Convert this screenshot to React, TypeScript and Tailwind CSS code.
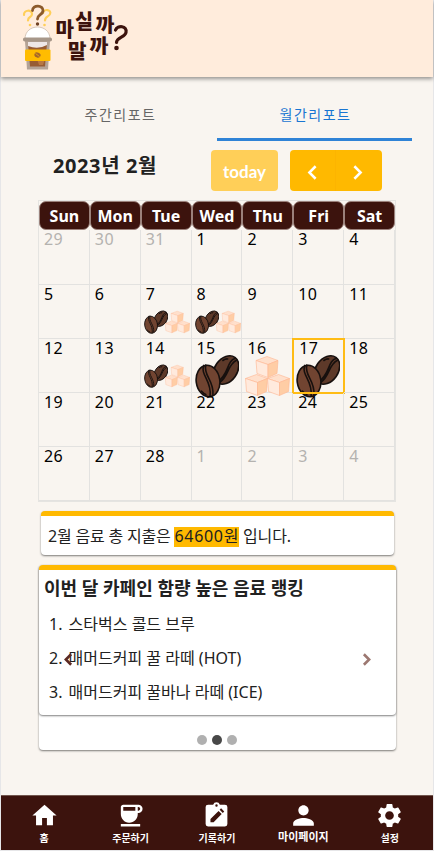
import React from 'react';
import { MdHome, MdCoffee, MdPerson, MdSettings } from 'react-icons/md';

const Chevron = ({ right = false, className }: { right?: boolean; className: string }) => (
  <svg viewBox="0 0 24 24" className={className} fill="none" stroke="currentColor">
    <path d={right ? 'm9 6 6 6-6 6' : 'm15 6-6 6 6 6'} />
  </svg>
);

const Beans = ({ className }: { className: string }) => (
  <svg viewBox="0 0 44 44" preserveAspectRatio="none" className={className}>
    <g stroke="#17100e" strokeWidth="1.6" strokeLinecap="round">
      <g transform="rotate(35 31 16)">
        <ellipse cx="31" cy="16" rx="11.2" ry="15.5" fill="#5d3929" />
        <path d="M32 1c-6 8 4 15-1 30M34 2c-5 9 3 17-1 28" fill="none" />
        <path d="M23 10q1-3 3-4" fill="none" />
      </g>
      <g transform="rotate(-8 13 27)">
        <ellipse cx="13" cy="27" rx="11.8" ry="15.8" fill="#714431" />
        <path d="M11 11c-5 9 6 16 2 31M13 11c-4 10 6 16 3 30" fill="none" />
        <path d="M5 36q2 3 4 4" fill="none" />
      </g>
    </g>
  </svg>
);

const Cube = ({ x, y }: { x: number; y: number }) => (
  <g transform={`translate(${x} ${y})`} stroke="#ffb591" strokeWidth=".6" strokeLinejoin="round">
    <path d="M0 4 11 0 22 4 12 8Z" fill="#ffe0cc" />
    <path d="M0 4 12 8V21L1 17Z" fill="#ffeadd" />
    <path d="M12 8 22 4 21 17 12 21Z" fill="#ffcda5" />
  </g>
);

const Sugar = ({ className }: { className: string }) => (
  <svg viewBox="0 0 45 41" className={className}>
    <Cube x={11} y={1} />
    <Cube x={0.5} y={19} />
    <Cube x={22.5} y={19} />
  </svg>
);

const Logo = () => (
  <svg viewBox="0 0 120 72" className="ml-[17px] mt-[3px] h-[72px] w-[120px] shrink-0">
    <g fill="none" strokeLinecap="round" strokeLinejoin="round">
      <path d="M6 12c-.5-5 8-6 8-1 0 4-4 2-4 6.500M25 10c1-5 9-3 7 1-1 3-5 2-5 6.500" stroke="#ffcf58" strokeWidth="2.200" />
      <path d="M14.500 7.500c0-6 11-6 10.500.5-.5 4-5.500 3.500-5.500 8" stroke="#8c5a2b" strokeWidth="2.800" />
    </g>
    <circle cx="19.500" cy="21" r="1.700" fill="#704224" />
    <circle cx="12" cy="22" r="1.300" fill="#ffcf58" />
    <circle cx="26.500" cy="22" r="1.300" fill="#ffcf58" />
    <path d="M7 36c0-16 25-16 25 0Z" fill="#fff" stroke="#cdbcae" strokeWidth=".8" />
    <path d="M7 38h25l-2 28.500H9Z" fill="#b4a396" />
    <path d="M10 40h19l-2 23.500H12Z" fill="#975c34" />
    <path d="M10 39h19v3q-9 5-19 1Z" fill="#eee7e7" />
    <path d="M19 56h8l-2 6h-4Z" fill="#b87843" />
    <rect x="5" y="34.500" width="29" height="4" rx="1.800" fill="#a79789" />
    <rect x="7" y="46.500" width="25.500" height="11.500" rx="1" fill="#ffbc00" />
    <ellipse cx="19.500" cy="52" rx="3.200" ry="2.500" fill="#a4662c" transform="rotate(25 19.500 52)" />
    <path d="m17.500 50.500 4 3" stroke="#ffbc00" strokeWidth=".7" />
    <g fill="#3c130d" fontFamily="'Noto Sans CJK KR', sans-serif" fontWeight="800">
      <text x="37.500" y="34" fontSize="20" textLength="18.500" lengthAdjust="spacingAndGlyphs">마</text>
      <text x="57" y="25.500" fontSize="20" textLength="18" lengthAdjust="spacingAndGlyphs">실</text>
      <text x="77.500" y="29" fontSize="19" textLength="19" lengthAdjust="spacingAndGlyphs">까</text>
      <text x="50" y="56" fontSize="20" textLength="18.500" lengthAdjust="spacingAndGlyphs">말</text>
      <text x="71.500" y="50" fontSize="19.500" textLength="19" lengthAdjust="spacingAndGlyphs">까</text>
    </g>
    <path d="M97.500 27c2-5 12-4.500 10.500 2.500-1 5-9 4.500-9.500 10" fill="none" stroke="#3c130d" strokeWidth="3.200" strokeLinecap="round" />
    <circle cx="98.500" cy="45" r="2.300" fill="#3c130d" />
  </svg>
);

const RecordIcon = () => (
  <svg viewBox="0 0 24 24" className="size-[29px]" fill="currentColor">
    <path fillRule="evenodd" d="M19 3h-4.200a3 3 0 0 0-5.600 0H5a2 2 0 0 0-2 2v14a2 2 0 0 0 2 2h14a2 2 0 0 0 2-2V5a2 2 0 0 0-2-2Zm-7-.3a1 1 0 1 1 0 2 1 1 0 0 1 0-2ZM7 17.500v-2.600l6.700-6.700 2.600 2.600L9.600 17.500H7Zm10.200-7.600-2.600-2.600 1.200-1.200 2.600 2.600-1.200 1.200Z" />
  </svg>
);

const days = ['Sun', 'Mon', 'Tue', 'Wed', 'Thu', 'Fri', 'Sat'];
const dates = [29, 30, 31, ...Array.from({ length: 28 }, (_, i) => i + 1), 1, 2, 3, 4];

const Day = ({ date, index }: { date: number; index: number }) => {
  const outside = index < 3 || index > 30;
  const today = index === 19;
  const small = index === 9 || index === 10 || index === 16;
  return (
    <div className={`min-w-0 border-b border-r border-[#e3e2e0] pl-[5px] ${today ? 'outline-2 -outline-offset-1 outline-[#ffbc15]' : ''}`}>
      <div className={`relative z-10 h-[18px] text-[16px] leading-[18px] tracking-[.4px] ${outside ? 'text-[#b4b2af]' : 'text-black'} ${today ? 'pl-px' : ''}`}>{date}</div>
      {small && (
        <div className="-ml-[2px] mt-[7px] flex w-[48px] items-center">
          <Beans className="size-6 shrink-0" />
          <Sugar className="-ml-[3px] h-[24px] w-[25px] shrink-0" />
        </div>
      )}
      {(index === 17 || today) && <Beans className="-ml-[2px] -mt-[3px] h-[44px] w-[44px] max-w-none" />}
      {index === 18 && <Sugar className="-ml-[2px] -mt-[2px] h-[42px] w-[45px] max-w-none" />}
    </div>
  );
};

export default function App() {
  return (
    <div className="flex h-[851px] w-[434px] flex-col border-b border-l border-r border-[#e6e6e8] bg-[#f9f5f0] font-['Noto_Sans','Noto_Sans_CJK_KR',sans-serif] text-[#212121]">
      <header className="flex h-[77px] shrink-0 bg-[#ffecdc] shadow-[0_2px_4px_rgba(0,0,0,.4)]">
        <Logo />
      </header>
      <main className="flex h-[718px] shrink-0 flex-col pl-[38px] pr-[37px]">
        <nav className="-mx-[17px] mt-[14px] flex h-[50px] shrink-0 text-[14px] font-normal tracking-[1.500px]">
          <button className="w-[195px] pb-[3px] pl-[2px] text-[#666]">주간리포트</button>
          <button className="w-[195px] border-b-[3px] border-[#2f83d6] pl-[2px] text-[#1976d2]">월간리포트</button>
        </nav>
        <div className="mt-[9px] flex h-[41px] shrink-0 items-start pl-[14px]">
          <h1 className="w-[158px] text-[20px] font-bold leading-[31px] tracking-[.6px]">2023년 2월</h1>
          <button className="h-[41px] w-[67px] rounded bg-[#ffcf58] pt-0.5 font-['Lato'] text-[17px] font-bold text-white">today</button>
          <div className="ml-3 flex h-[41px] w-[92px] rounded bg-[#ffb900] text-white">
            <button className="flex flex-1 items-center justify-center border-r border-[#fdb400] pt-[3px]"><Chevron className="size-[25px] stroke-[2.400]" /></button>
            <button className="flex flex-1 items-center justify-center pr-[2px] pt-[3px]"><Chevron right className="size-[25px] stroke-[2.400]" /></button>
          </div>
        </div>
        <section className="-ml-px mt-[9px] w-[358px] shrink-0 border border-[#e5e4e1]">
          <div className="grid h-[29px] grid-cols-7">
            {days.map((day) => <div key={day} className="flex items-center justify-center rounded-[7px] border border-[#9b817b] bg-[#3c130d] pt-px text-[16px] font-bold text-white">{day}</div>)}
          </div>
          <div className="grid grid-cols-7 grid-rows-[55px_54px_54px_54px_54px]">
            {dates.map((date, i) => <Day key={i} date={date} index={i} />)}
          </div>
        </section>
        <section className="ml-[2px] mt-[9px] flex h-[44px] w-[353px] shrink-0 items-center rounded border-t-[5px] border-[#ffb900] bg-white pl-[7px] pt-[2px] text-[16px] tracking-[-.2px] shadow-[0_1px_2px_rgba(0,0,0,.5)]">
          <p className="whitespace-nowrap leading-[20px]">2월 음료 총 지출은 <mark className="inline-block h-[20px] bg-[#ffb900] leading-[19px] tracking-[.7px] text-inherit">64600원</mark> 입니다.</p>
        </section>
        <section className="mt-[10px] h-[185px] w-[357px] shrink-0 rounded bg-white shadow-[0_1px_2px_rgba(0,0,0,.5)]">
          <div className="relative h-[150px] rounded border-t-[5px] border-[#ffb900] bg-white pl-[5px] shadow-[0_1px_2px_rgba(0,0,0,.5)]">
            <h2 className="h-[37px] text-[18px] font-bold leading-[36px]">이번 달 카페인 함량 높은 음료 랭킹</h2>
            <ol className="pl-[5px] text-[16px] leading-[35px]">
              <li className="h-[34px]"><span className="mr-[2px]">1.</span> 스타벅스 콜드 브루</li>
              <li className="h-[34px]"><span className="mr-[2px]">2.</span> 매머드커피 꿀 라떼 (HOT)</li>
              <li className="h-[34px]"><span className="mr-[2px]">3.</span> 매머드커피 꿀바나 라떼 (ICE)</li>
            </ol>
            <button className="absolute left-[19px] top-[79px] text-[#5b2923]"><Chevron className="size-[21px] stroke-[3]" /></button>
            <button className="absolute right-[19px] top-[79px] text-[#9c7871]"><Chevron right className="size-[21px] stroke-[3]" /></button>
          </div>
          <div className="flex justify-center gap-[5px] pr-[2px] pt-[20px]">
            <span className="size-[10px] rounded-full bg-[#b0b0b0]" /><span className="size-[10px] rounded-full bg-[#484848]" /><span className="size-[10px] rounded-full bg-[#b0b0b0]" />
          </div>
        </section>
      </main>
      <footer className="grid h-[55px] shrink-0 grid-cols-5 border-t border-[#72564e] bg-[#3c130d] text-[10px] font-bold text-white">
        <div className="flex flex-col items-center pt-[5px]"><MdHome className="size-[29px]" /><span className="mt-px">홈</span></div>
        <div className="flex flex-col items-center pt-[5px]"><MdCoffee className="size-[29px]" /><span className="mt-px">주문하기</span></div>
        <div className="flex flex-col items-center pt-[5px]"><RecordIcon /><span className="mt-px">기록하기</span></div>
        <div className="flex flex-col items-center pt-[4px]"><MdPerson className="size-[31px]" /><span className="-mt-[2px] text-[11px]">마이페이지</span></div>
        <div className="flex flex-col items-center pt-[5px]"><MdSettings className="size-[29px]" /><span className="mt-px">설정</span></div>
      </footer>
    </div>
  );
}
